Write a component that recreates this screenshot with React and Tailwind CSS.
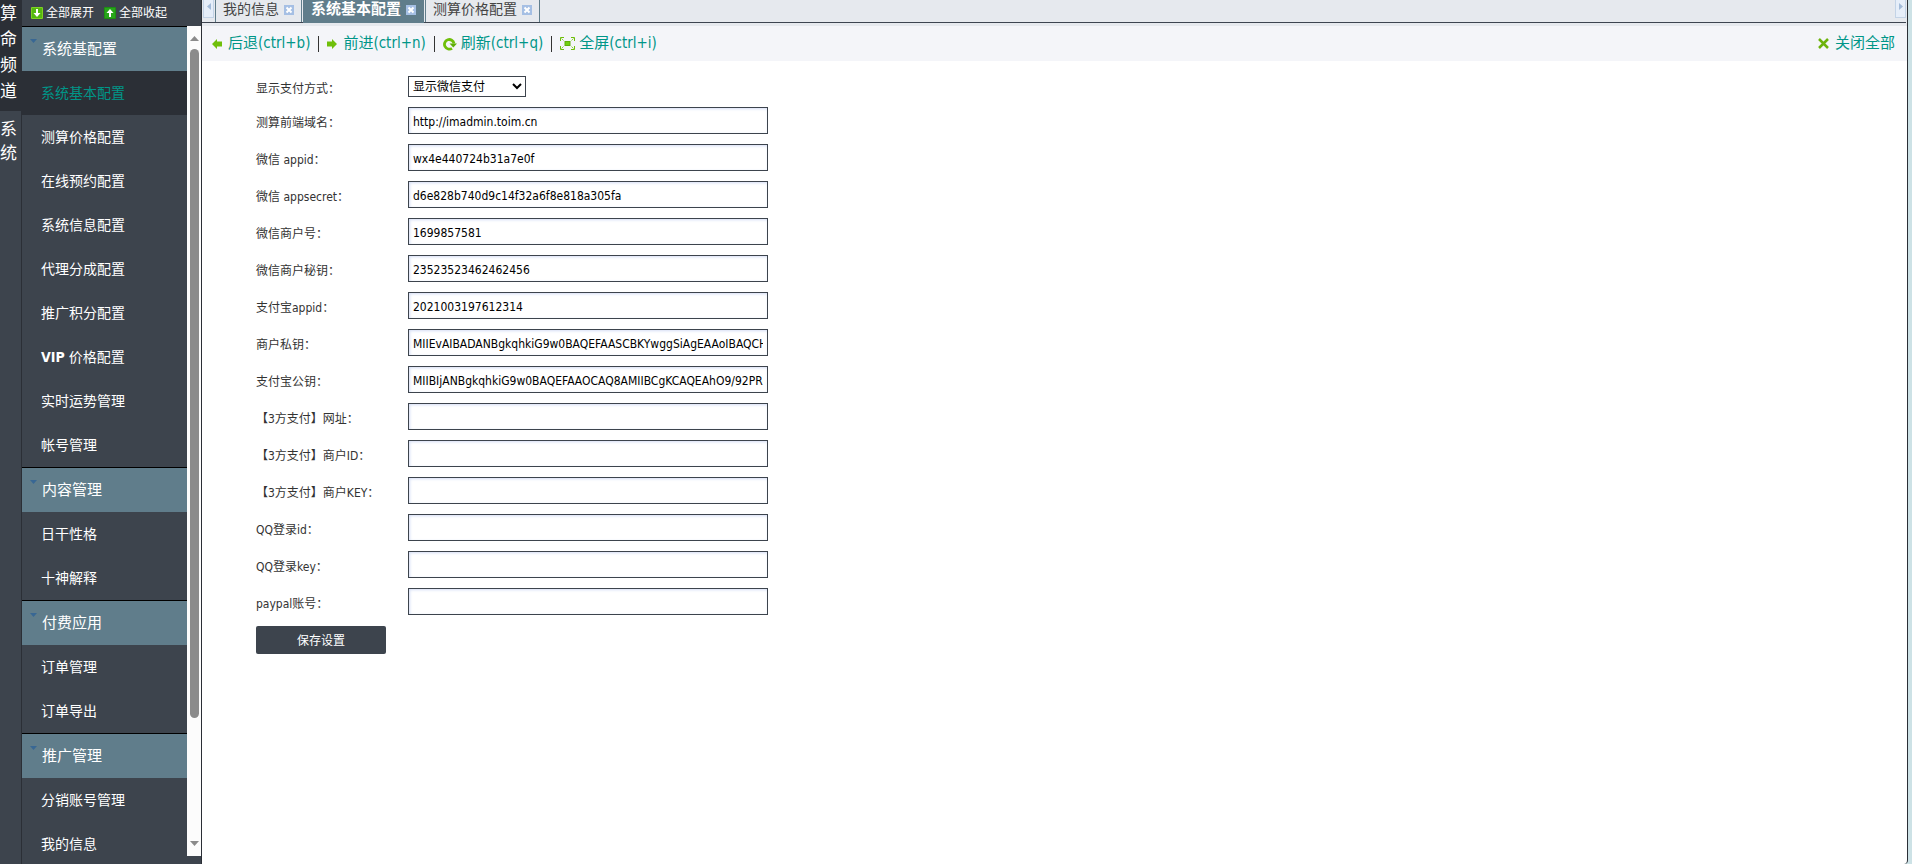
import { useState } from "react";

const CHANNELS = [
  { key: "fortune", chars: ["算", "命", "频", "道"], active: true },
  { key: "system", chars: ["系", "统"], active: false },
];

const MENU_GROUPS = [
  {
    title: "系统基配置",
    items: [
      "系统基本配置",
      "测算价格配置",
      "在线预约配置",
      "系统信息配置",
      "代理分成配置",
      "推广积分配置",
      "VIP 价格配置",
      "实时运势管理",
      "帐号管理",
    ],
  },
  { title: "内容管理", items: ["日干性格", "十神解释"] },
  { title: "付费应用", items: ["订单管理", "订单导出"] },
  { title: "推广管理", items: ["分销账号管理", "我的信息"] },
];

const TABS = ["我的信息", "系统基本配置", "测算价格配置"];

const FIELDS = [
  { key: "domain", label: "测算前端域名：", value: "http://imadmin.toim.cn" },
  { key: "wx_appid", label: "微信 appid：", value: "wx4e440724b31a7e0f" },
  { key: "wx_secret", label: "微信 appsecret：", value: "d6e828b740d9c14f32a6f8e818a305fa" },
  { key: "wx_mch", label: "微信商户号：", value: "1699857581" },
  { key: "wx_key", label: "微信商户秘钥：", value: "23523523462462456" },
  { key: "ali_appid", label: "支付宝appid：", value: "2021003197612314" },
  {
    key: "ali_private",
    label: "商户私钥：",
    value: "MIIEvAIBADANBgkqhkiG9w0BAQEFAASCBKYwggSiAgEAAoIBAQCHk2",
  },
  {
    key: "ali_public",
    label: "支付宝公钥：",
    value: "MIIBIjANBgkqhkiG9w0BAQEFAAOCAQ8AMIIBCgKCAQEAhO9/92PRq7",
  },
  { key: "pay3_url", label: "【3方支付】网址：", value: "" },
  { key: "pay3_id", label: "【3方支付】商户ID：", value: "" },
  { key: "pay3_key", label: "【3方支付】商户KEY：", value: "" },
  { key: "qq_id", label: "QQ登录id：", value: "" },
  { key: "qq_key", label: "QQ登录key：", value: "" },
  { key: "paypal", label: "paypal账号：", value: "" },
];

function ExpandIcon({ up }) {
  return (
    <svg width="12" height="12" viewBox="0 0 12 12" aria-hidden="true">
      <rect width="12" height="12" rx="1" fill={up ? "#1d8f12" : "#7ed321"} />
      <rect x="1" y="1" width="10" height="10" fill={up ? "#27a51a" : "#55b80f"} />
      <path
        d={up ? "M6 2 9.500 6H7v4H5V6H2.500z" : "M6 10 2.500 6H5V2h2v4h2.500z"}
        fill="#fff"
      />
    </svg>
  );
}

function ArrowIcon({ right }) {
  return (
    <svg width="10" height="10" viewBox="0 0 10 10" aria-hidden="true">
      <path
        d={right ? "M10 5 5 0v2.500H0v5h5V10z" : "M0 5l5-5v2.500h5v5H5V10z"}
        fill="#6fbf0a"
      />
    </svg>
  );
}

function RefreshIcon() {
  return (
    <svg width="14" height="14" viewBox="0 0 14 14" aria-hidden="true">
      <path d="M9 11.300A4.800 4.800 0 1 1 11 6.500" fill="none" stroke="#6fbf0a" strokeWidth="2.800" />
      <path d="M6.500 6.500H14L10.300 10.500z" fill="#5fae08" />
    </svg>
  );
}

function FullscreenIcon() {
  return (
    <svg width="15" height="13" viewBox="0 0 15 13" aria-hidden="true">
      <rect x="5" y="4.500" width="5" height="4" fill="#6fd010" stroke="#5fae08" />
      <path
        d="M.5 4V.5H4M11 .5h3.500V4M14.500 9v3.500H11M4 12.500H.5V9"
        fill="none"
        stroke="#6fbf0a"
      />
      <path
        d="M1.500 1.500l2 2M13.500 1.500l-2 2M13.500 11.500l-2-2M1.500 11.500l2-2"
        stroke="#8ed23c"
      />
    </svg>
  );
}

function CloseAllIcon() {
  return (
    <svg width="11" height="11" viewBox="0 0 11 11" aria-hidden="true">
      <path d="M1 1l9 9M10 1l-9 9" stroke="#6db30c" strokeWidth="2.500" />
    </svg>
  );
}

function ChannelRail() {
  return (
    <nav className="flex w-[22px] shrink-0 flex-col border-r border-[#2b2f36] bg-[#3d444d] text-[17px] text-white">
      {CHANNELS.map((channel) => (
        <a
          key={channel.key}
          href="#"
          className={
            channel.active
              ? "flex h-[111px] flex-col bg-[#2b2f36] leading-[26px]"
              : "flex flex-col pt-1.5 leading-6"
          }
        >
          {channel.chars.map((char) => (
            <span key={char}>{char}</span>
          ))}
        </a>
      ))}
    </nav>
  );
}

function MenuScrollbar() {
  return (
    <div className="flex w-[14px] shrink-0 flex-col items-center bg-[#fcfcfc] pt-2.5 pb-2.5">
      <svg width="9" height="5" viewBox="0 0 9 5" aria-hidden="true">
        <path d="M4.500 0 9 5H0z" fill="#8b8b8b" />
      </svg>
      <div className="mt-2 w-[9px] flex-[669] rounded-full bg-[#8b8b8b]" />
      <div className="flex-[123]" />
      <svg width="9" height="5" viewBox="0 0 9 5" aria-hidden="true">
        <path d="M4.500 5 9 0H0z" fill="#8b8b8b" />
      </svg>
    </div>
  );
}

function SideMenu({ active, onSelect }) {
  return (
    <aside className="flex w-[180px] shrink-0 flex-col border-r border-[#2b2f36] bg-[#3d444d] pb-2 text-white">
      <div className="flex h-[26px] shrink-0 items-center gap-[10px] pl-[9px] text-xs">
        <button type="button" className="flex items-center gap-[3px]">
          <ExpandIcon />
          全部展开
        </button>
        <button type="button" className="flex items-center gap-[3px]">
          <ExpandIcon up />
          全部收起
        </button>
      </div>
      <div className="flex min-h-0 flex-1">
        <div className="flex-1 overflow-hidden">
          {MENU_GROUPS.map((group) => (
            <section key={group.title}>
              <h2 className="flex h-[45px] border-t border-black bg-[#607d8b] pl-2 text-[15px] leading-[44px]">
                <svg className="mt-3 mr-[5px]" width="7" height="4" viewBox="0 0 7 4" aria-hidden="true">
                  <path d="M0 0h7L3.500 4z" fill="#386794" />
                </svg>
                {group.title}
              </h2>
              <ul>
                {group.items.map((item) => (
                  <li key={item}>
                    <a
                      href="#"
                      onClick={() => onSelect(item)}
                      className={[
                        "block h-11 pl-[19px] text-sm leading-[44px]",
                        active === item ? "bg-[#2b2f36] text-[#009688]" : "",
                      ].join(" ")}
                    >
                      {item.startsWith("VIP") ? (
                        <>
                          <b>VIP</b>
                          {item.slice(3)}
                        </>
                      ) : (
                        item
                      )}
                    </a>
                  </li>
                ))}
              </ul>
            </section>
          ))}
        </div>
        <MenuScrollbar />
      </div>
    </aside>
  );
}

function TabScroller({ right }) {
  return (
    <button
      type="button"
      aria-label={right ? "向右" : "向左"}
      className="flex h-[18px] w-[11px] shrink-0 items-start justify-center border border-t-0 border-[#c3d3e6] bg-[#e6eef9] pt-[3px]"
    >
      <svg width="4" height="7" viewBox="0 0 4 7" aria-hidden="true">
        <path d={right ? "M0 0l4 3.500L0 7z" : "M4 0L0 3.500 4 7z"} fill="#a3bbd9" />
      </svg>
    </button>
  );
}

function TabBar({ active, onSelect }) {
  return (
    <div className="flex h-[23px] shrink-0 bg-[#e6e9ee] pr-px">
      <div className="flex flex-1 gap-px border-b border-[#3d4450] pl-px">
        <TabScroller />
        {TABS.map((tab) => (
          <div
            key={tab}
            className={[
              "flex gap-[5px] border-x border-[#607d8b] px-[7px]",
              active === tab
                ? "-mb-px bg-[#607d8b] text-[15px] font-bold text-white"
                : "text-sm text-[#444]",
            ].join(" ")}
          >
            <button type="button" className="h-[18px] leading-[18px]" onClick={() => onSelect(tab)}>
              {tab}
            </button>
            <button type="button" aria-label="关闭" className="mt-[5px] h-[10px] w-[10px] bg-[#a5bfe4]">
              <svg width="10" height="10" viewBox="0 0 10 10" aria-hidden="true">
                <path d="M2.500 2.500l5 5M7.500 2.500l-5 5" stroke="#fff" strokeWidth="2" />
              </svg>
            </button>
          </div>
        ))}
        <div className="ml-auto">
          <TabScroller right />
        </div>
      </div>
    </div>
  );
}

function Divider() {
  return <span className="mx-2 h-4 w-px bg-[#333]" />;
}

function Toolbar() {
  return (
    <div className="flex h-[38px] shrink-0 items-center border-t-[3px] border-[#e6e9ee] bg-[#f4f5f9] pr-3 pl-[10px] text-[15px] text-[#009688]">
      <button type="button" className="flex items-center gap-[6px]">
        <ArrowIcon />
        后退(ctrl+b)
      </button>
      <Divider />
      <button type="button" className="flex items-center gap-[6px]">
        <ArrowIcon right />
        前进(ctrl+n)
      </button>
      <Divider />
      <button type="button" className="flex items-center gap-[4px]">
        <RefreshIcon />
        刷新(ctrl+q)
      </button>
      <Divider />
      <button type="button" className="flex items-center gap-[4px]">
        <FullscreenIcon />
        全屏(ctrl+i)
      </button>
      <button type="button" className="ml-auto flex items-center gap-[6px]">
        <CloseAllIcon />
        关闭全部
      </button>
    </div>
  );
}

function ConfigForm() {
  const [values, setValues] = useState(() =>
    Object.fromEntries(FIELDS.map((field) => [field.key, field.value])),
  );

  const handleChange = (event) => {
    const { name, value } = event.target;
    setValues((current) => ({ ...current, [name]: value }));
  };

  return (
    <form
      className="flex flex-col gap-[10px] pt-[15px] pl-[54px] text-xs text-[#333]"
      onSubmit={(event) => event.preventDefault()}
    >
      <div className="flex items-center">
        <label htmlFor="pay_mode" className="w-[152px] pt-1">
          显示支付方式：
        </label>
        <select
          id="pay_mode"
          defaultValue="wechat"
          className="h-[21px] w-[118px] border border-[#3d444d] bg-white text-black"
        >
          <option value="wechat">显示微信支付</option>
          <option value="alipay">显示支付宝</option>
        </select>
      </div>

      {FIELDS.map((field) => (
        <div key={field.key} className="flex items-center">
          <label htmlFor={field.key} className="w-[152px] pt-1">
            {field.label}
          </label>
          <input
            id={field.key}
            name={field.key}
            type="text"
            value={values[field.key]}
            onChange={handleChange}
            className="h-[27px] w-[360px] border border-[#3d444d] bg-white px-1 pt-0.5 text-black shadow-[inset_1px_1px_3px_#d5def5] outline-none"
          />
        </div>
      ))}

      <button
        type="submit"
        className="mt-px h-7 w-[130px] rounded-xs bg-[#3d444d] pt-0.5 text-white"
      >
        保存设置
      </button>
    </form>
  );
}

export default function App() {
  const [activeTab, setActiveTab] = useState("系统基本配置");

  return (
    <div className="flex h-screen overflow-hidden bg-[#cde2e6] font-['DejaVu_Sans_Condensed','Noto_Sans_CJK_SC',sans-serif]">
      <ChannelRail />
      <SideMenu active={activeTab} onSelect={setActiveTab} />
      <main className="mr-1 flex min-w-0 flex-1 flex-col rounded-br border-r border-[#2b2f36] bg-white">
        <TabBar active={activeTab} onSelect={setActiveTab} />
        <Toolbar />
        <ConfigForm />
      </main>
    </div>
  );
}
